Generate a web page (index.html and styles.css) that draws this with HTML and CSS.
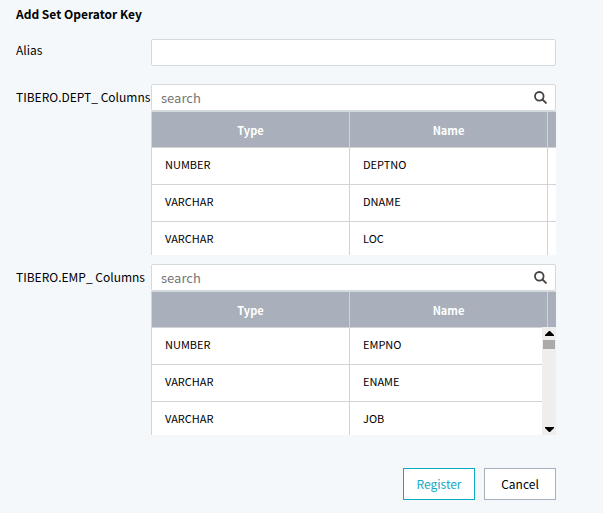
FILE: index.html
```html
<!DOCTYPE html>
<html lang="en">
<head>
<meta charset="utf-8">
<title>Add Set Operator Key</title>
<link rel="stylesheet" href="styles.css">
</head>
<body>
<form class="dialog">
  <h1 class="title">Add Set Operator Key</h1>

  <div class="row row-alias">
    <label class="label" for="alias">Alias</label>
    <input class="input" id="alias" type="text">
  </div>

  <div class="row">
    <label class="label" for="dept-search">TIBERO.DEPT_ Columns</label>
    <div class="field">
      <div class="search">
        <input class="input" id="dept-search" type="text" placeholder="search">
        <svg class="search-icon" viewBox="0 0 13 13"><circle cx="5.3" cy="5.3" r="4.3"/><path d="M8.5 8.5l4 4"/></svg>
      </div>
      <div class="grid">
        <table class="table">
          <thead><tr><th>Type</th><th>Name</th><td></td></tr></thead>
          <tbody>
            <tr><td>NUMBER</td><td>DEPTNO</td><td></td></tr>
            <tr><td>VARCHAR</td><td>DNAME</td><td></td></tr>
            <tr><td>VARCHAR</td><td>LOC</td><td></td></tr>
          </tbody>
        </table>
      </div>
    </div>
  </div>

  <div class="row">
    <label class="label" for="emp-search">TIBERO.EMP_ Columns</label>
    <div class="field">
      <div class="search">
        <input class="input" id="emp-search" type="text" placeholder="search">
        <svg class="search-icon" viewBox="0 0 13 13"><circle cx="5.3" cy="5.3" r="4.3"/><path d="M8.5 8.5l4 4"/></svg>
      </div>
      <div class="grid">
        <table class="table">
          <thead><tr><th>Type</th><th>Name</th><td></td></tr></thead>
          <tbody>
            <tr><td>NUMBER</td><td>EMPNO</td><td></td></tr>
            <tr><td>VARCHAR</td><td>ENAME</td><td></td></tr>
            <tr><td>VARCHAR</td><td>JOB</td><td></td></tr>
          </tbody>
        </table>
        <div class="scrollbar">
          <svg class="arrow" viewBox="0 0 9 5"><path d="M0 5V4l4-4h1l4 4v1z"/></svg>
          <div class="thumb"></div>
          <svg class="arrow arrow-down" viewBox="0 0 9 5"><path d="M0 0v1l4 4h1l4-4V0z"/></svg>
        </div>
      </div>
    </div>
  </div>

  <div class="actions">
    <button class="button button-primary" type="button">Register</button>
    <button class="button" type="button">Cancel</button>
  </div>
</form>
</body>
</html>
```
FILE: styles.css
```css
* {
  box-sizing: border-box;
}

body {
  margin: 0;
  background: #f4f8fb;
  color: #000;
  font: 12px/20px "Noto Sans CJK KR", "Noto Sans", sans-serif;
}

.dialog {
  padding: 4px 47px 13px 16px;
}

.title {
  margin: 0 0 15px;
  font-size: 12px;
  line-height: 20px;
  font-weight: 700;
}

.row {
  display: grid;
  grid-template-columns: 135px minmax(0, 1fr);
  align-items: start;
  margin-bottom: 9px;
}

.row-alias {
  margin-bottom: 18px;
}

.label {
  padding-top: 3px;
  white-space: nowrap;
}

.row-alias .label {
  padding-top: 1px;
}

.input {
  display: block;
  width: 100%;
  height: 27px;
  padding: 0 32px 0 9px;
  border: 1px solid #d3dade;
  border-radius: 2px;
  background: #fff;
  color: #333;
  font: inherit;
  font-size: 13px;
  outline: none;
}

.input::placeholder {
  color: #757575;
  opacity: 1;
}

.search {
  position: relative;
}

.search-icon {
  position: absolute;
  top: 7px;
  right: 9px;
  width: 13px;
  height: 13px;
  fill: none;
  stroke: #444;
  stroke-width: 1.8;
}

.grid {
  position: relative;
  height: 144px;
  overflow: hidden;
  border-top: 1px solid #d3d8db;
  border-left: 1px solid #d3d5d8;
  background: #fff;
}

.table {
  width: 100%;
  table-layout: fixed;
  border-collapse: separate;
  border-spacing: 0;
  font-size: 11px;
  line-height: 16px;
}

.table th,
.table td {
  height: 37px;
  padding: 0 13px 4px;
  border-right: 1px solid #d3d3d5;
  border-bottom: 1px solid #d3d3d5;
  text-align: left;
}

.table th {
  width: 198px;
}

.table td:last-child {
  padding: 0;
  border-right: 0;
}

.table thead th,
.table thead td {
  height: 36px;
  padding-bottom: 0;
  background: #a9b0bb;
  color: #fff;
  text-align: center;
}

.scrollbar {
  position: absolute;
  top: 35px;
  right: 0;
  bottom: 0;
  display: flex;
  flex-direction: column;
  align-items: center;
  width: 14px;
  padding: 4px 0 3px;
  background: #eee;
}

.arrow {
  width: 9px;
  height: 5px;
  fill: #000;
}

.arrow-down {
  margin-top: auto;
}

.thumb {
  width: 12px;
  height: 9px;
  margin-top: 4px;
  background: #aaa;
}

.actions {
  display: flex;
  justify-content: flex-end;
  gap: 9px;
  margin-top: 33px;
}

.button {
  width: 72px;
  height: 32px;
  padding: 0;
  border: 1px solid #a9b0bf;
  background: #fff;
  color: #000;
  font: inherit;
}

.button-primary {
  border-color: #0ba8c4;
  color: #18a9c5;
}
```
